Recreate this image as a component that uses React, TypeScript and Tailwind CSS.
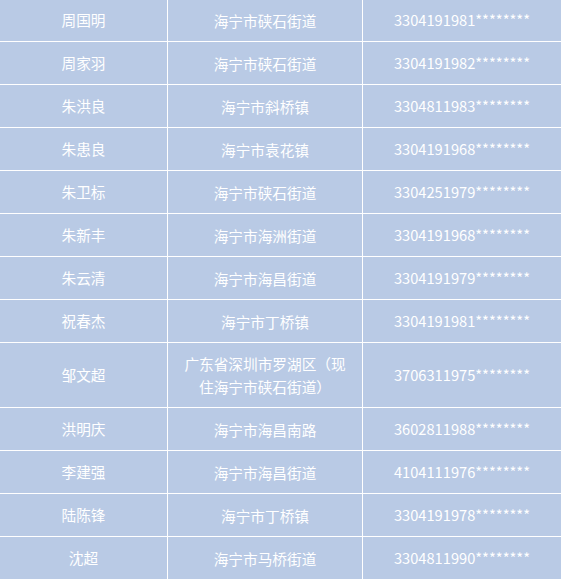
import React from "react";

const rows: [string, React.ReactNode, string][] = [
  ["周国明", "海宁市硖石街道", "3304191981********"],
  ["周家羽", "海宁市硖石街道", "3304191982********"],
  ["朱洪良", "海宁市斜桥镇", "3304811983********"],
  ["朱患良", "海宁市袁花镇", "3304191968********"],
  ["朱卫标", "海宁市硖石街道", "3304251979********"],
  ["朱新丰", "海宁市海洲街道", "3304191968********"],
  ["朱云清", "海宁市海昌街道", "3304191979********"],
  ["祝春杰", "海宁市丁桥镇", "3304191981********"],
  [
    "邹文超",
    <>
      <span className="block">广东省深圳市罗湖区（现</span>
      <span className="block">住海宁市硖石街道）</span>
    </>,
    "3706311975********",
  ],
  ["洪明庆", "海宁市海昌南路", "3602811988********"],
  ["李建强", "海宁市海昌街道", "4104111976********"],
  ["陆陈锋", "海宁市丁桥镇", "3304191978********"],
  ["沈超", "海宁市马桥街道", "3304811990********"],
];

export default function App() {
  return (
    <div
      className="w-[561px] h-[580px] overflow-hidden bg-[#b9cae5] text-white text-[14.67px]"
      style={{ fontFamily: '"Noto Sans CJK SC", "Noto Sans", sans-serif' }}
    >
      <div className="-mt-px flex flex-col">
        {rows.map(([name, addr, id], i) => {
          const tall = i === 8;
          return (
            <div
              key={i}
              className={`flex border-b border-white ${tall ? "h-[65px]" : "h-[43px]"}`}
            >
              <div className="w-[168px] shrink-0 border-r border-white flex items-center justify-center">
                {name}
              </div>
              <div className="w-[195px] shrink-0 border-r border-white flex items-center justify-center text-center leading-[23px]">
                <div>{addr}</div>
              </div>
              <div className="flex-1 flex items-center justify-center">{id}</div>
            </div>
          );
        })}
      </div>
    </div>
  );
}
